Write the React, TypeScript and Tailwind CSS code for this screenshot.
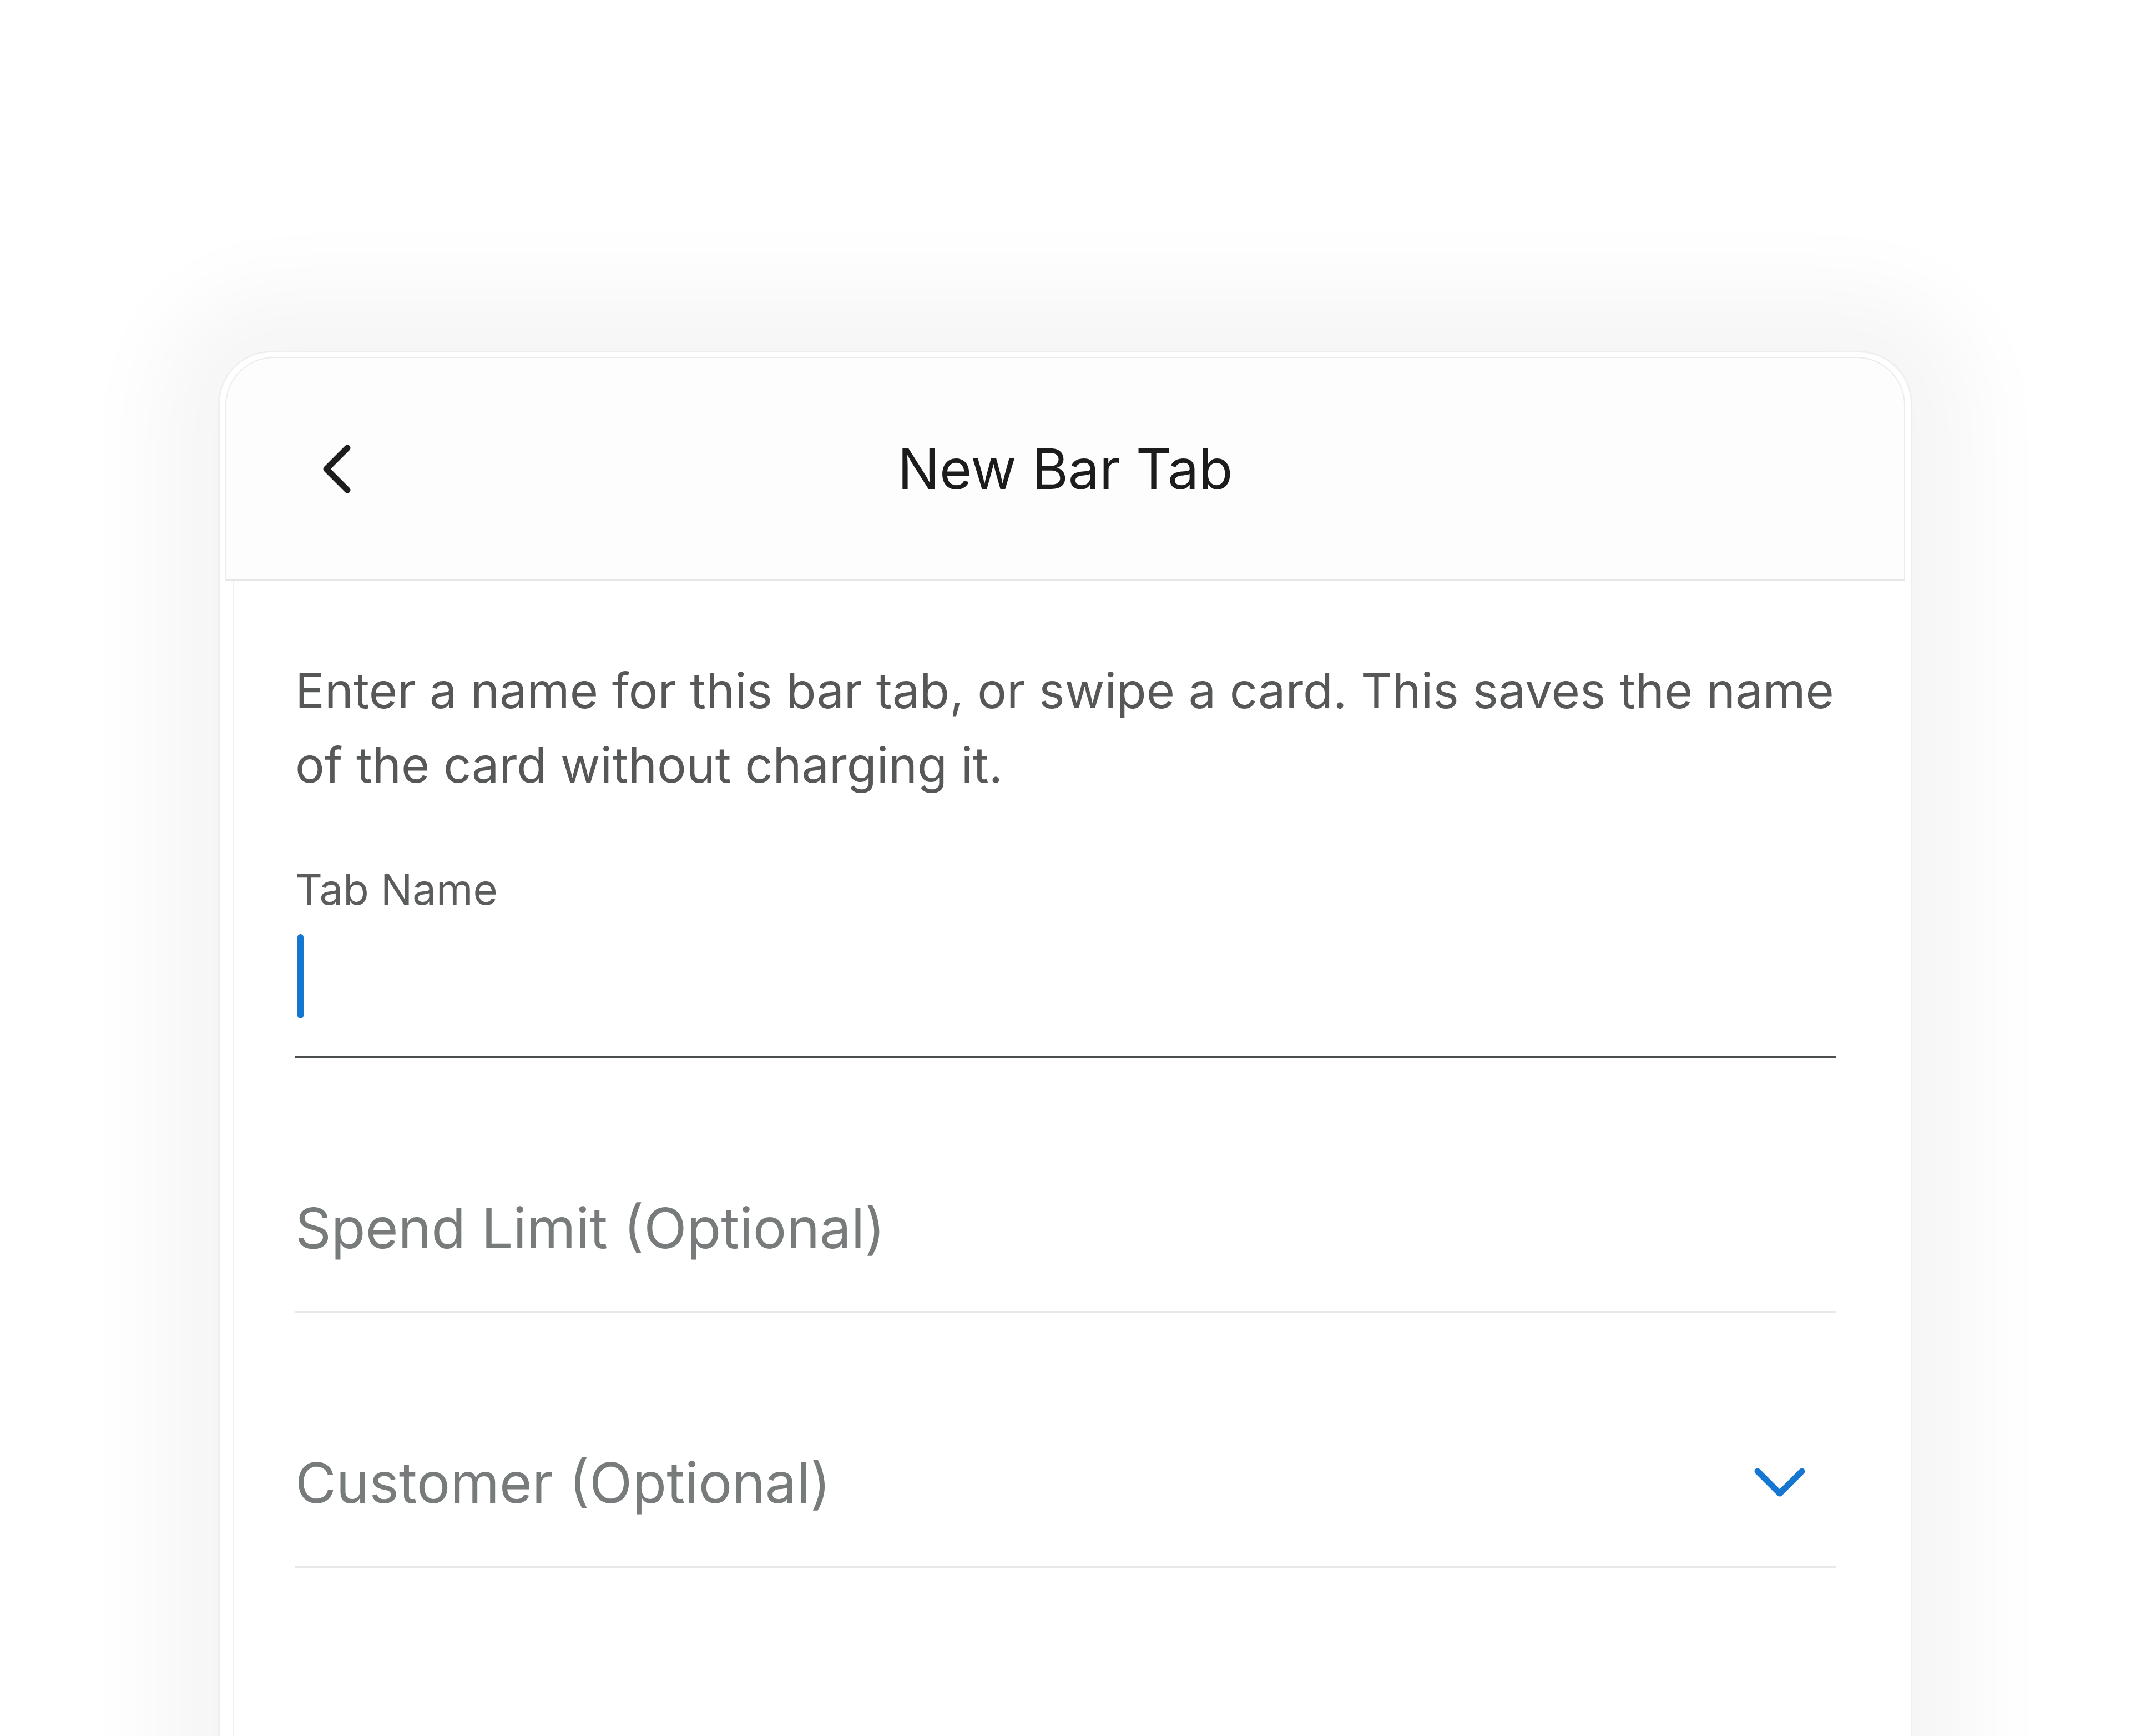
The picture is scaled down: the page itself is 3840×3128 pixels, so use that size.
import React from "react";

const font = { fontFamily: "Inter, 'Noto Sans', sans-serif" };

function BackIcon() {
  return (
    <svg width="56" height="96" viewBox="0 0 56 96" fill="none">
      <path
        d="M48 10 L10 48 L48 86"
        stroke="#1d1d1d"
        strokeWidth="11"
        strokeLinecap="round"
        strokeLinejoin="round"
      />
    </svg>
  );
}

function ChevronDown() {
  return (
    <svg width="100" height="60" viewBox="0 0 100 60" fill="none">
      <path
        d="M10 10 L50 50 L90 10"
        stroke="#1677d2"
        strokeWidth="11"
        strokeLinecap="round"
        strokeLinejoin="round"
      />
    </svg>
  );
}

function OptionalField({ label, dropdown }: { label: string; dropdown?: boolean }) {
  return (
    <div className="flex items-center justify-between pt-[245px] pb-[90px] border-b-4 border-[#e8e8e8]">
      <span className="text-[101px] leading-[120px] text-[#777b7b]">{label}</span>
      {dropdown && (
        <span className="pr-[52px]">
          <ChevronDown />
        </span>
      )}
    </div>
  );
}

export default function App() {
  return (
    <div className="w-[3840px] h-[3128px] overflow-hidden bg-white" style={font}>
      <div className="pt-[632px] pl-[393px]">
        {/* device frame */}
        <div className="w-[3053px] h-[2700px] rounded-t-[96px] border-[3px] border-[#efefef] bg-white px-[10px] pt-[8px] shadow-[0_0_160px_110px_rgba(0,0,0,0.04)]">
          {/* top bar */}
          <div className="h-[404px] rounded-t-[87px] border-2 border-b-[3px] border-[#ececec] border-b-[#e6e6e6] bg-[#fdfdfd] flex items-center px-[170px]">
            <BackIcon />
            <h1 className="flex-1 text-center text-[100px] leading-none text-[#1c1c1c]">
              New Bar Tab
            </h1>
            <div className="w-[56px]" />
          </div>

          {/* form */}
          <div className="mx-[14px] h-[2300px] border-l-2 border-[#efefef] pl-[110px] pr-[110px] pt-[130px]">
            <p className="text-[88px] leading-[134px] text-[#565858]">
              Enter a name for this bar tab, or swipe a card. This saves the name
              <br />
              of the card without charging it.
            </p>

            <label className="block mt-[112px] text-[76px] leading-[91px] text-[#5b5d5d]">
              Tab Name
            </label>
            <div className="mt-[35px] h-[224px] border-b-[5px] border-[#4c4f4f]">
              <div className="ml-[4px] w-[11px] h-[152px] rounded-full bg-[#1677d2]" />
            </div>

            <OptionalField label="Spend Limit (Optional)" />
            <OptionalField label="Customer (Optional)" dropdown />
          </div>
        </div>
      </div>
    </div>
  );
}
